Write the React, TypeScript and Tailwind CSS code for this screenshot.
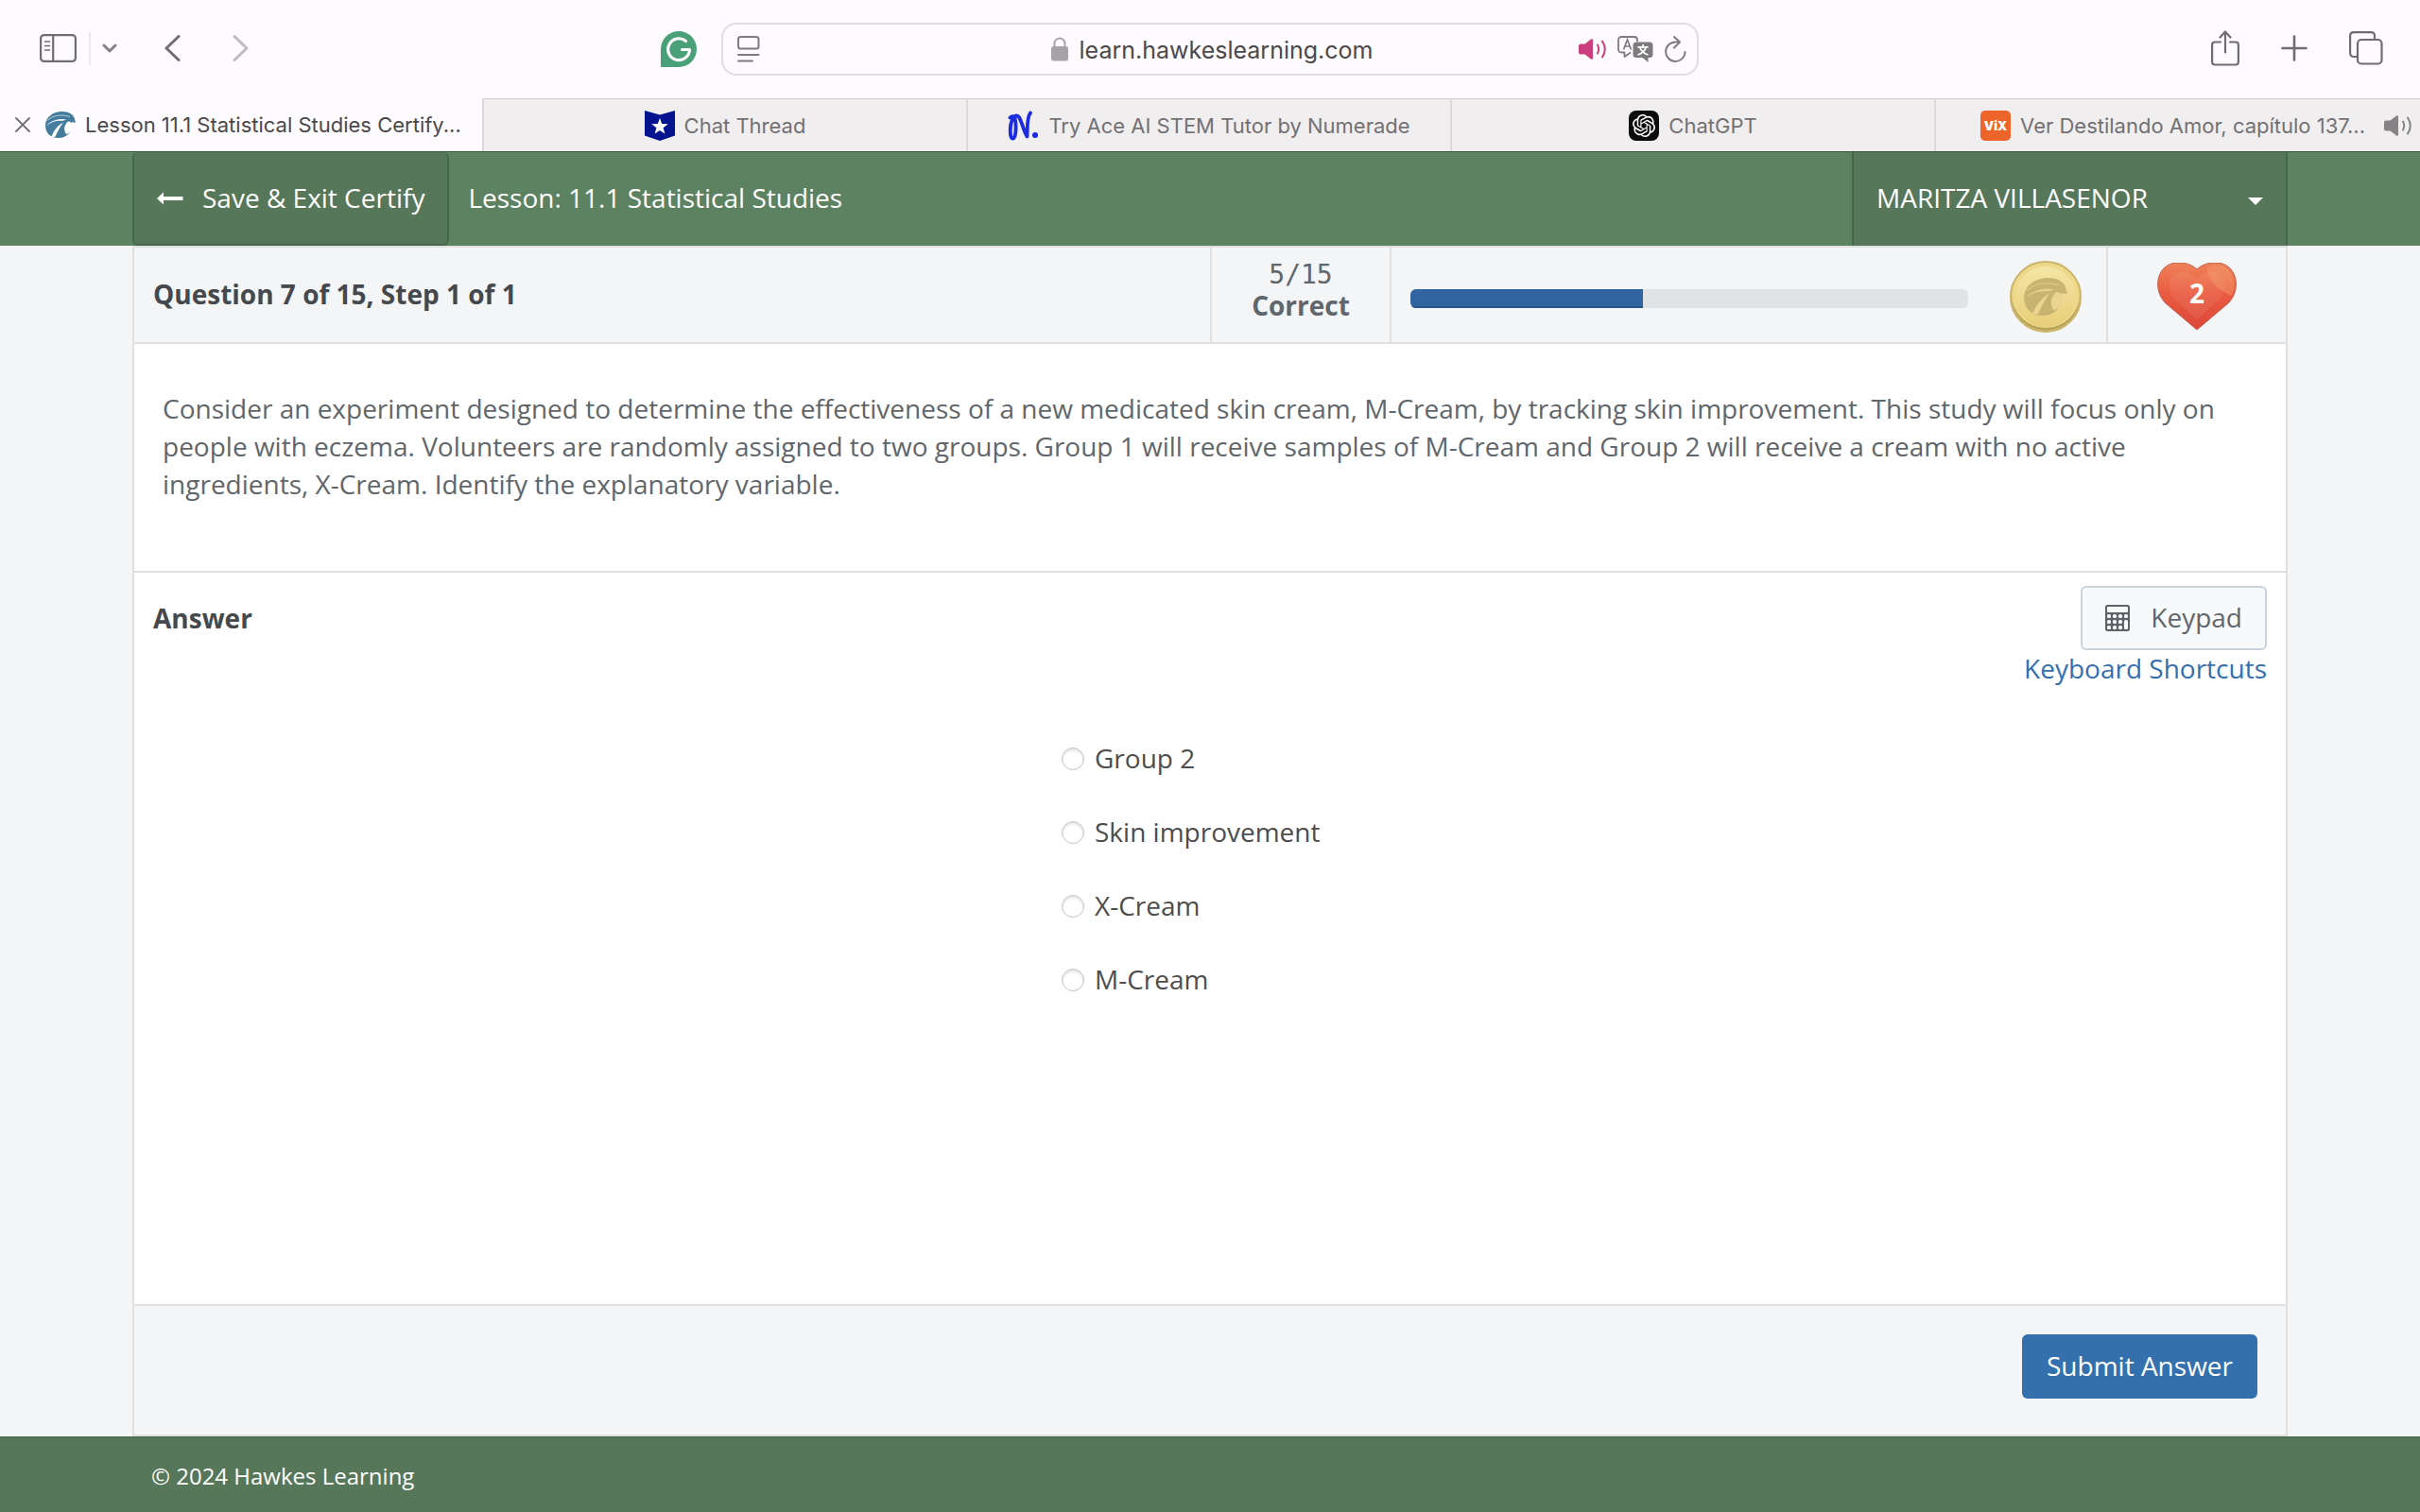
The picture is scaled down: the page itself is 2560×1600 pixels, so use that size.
import React, { useState } from "react";
import clsx from "clsx";
import { SiOpenai } from "react-icons/si";

interface Tab {
  title: string;
  icon: React.ReactNode;
}

const CHOICES = ["Group 2", "Skin improvement", "X-Cream", "M-Cream"];

const CORRECT = 5;
const REQUIRED = 12;
const TOTAL = 15;
const LIVES = 2;

function HawkMark({ className, dark, light }: { className?: string; dark: string; light: string }) {
  return (
    <svg viewBox="0 0 32 28" className={className} aria-hidden="true">
      <path d="M0 15C0 6 8 0 18 0c7 0 11 3 12.500 6.500L32 12l-4-1c1 9-4 17-14 17C5 28 0 22 0 15Z" fill={dark} />
      <path d="M2 9.500C8 4 17 2.500 26 5.500" fill="none" stroke={light} strokeWidth="1" opacity="0.6" />
      <path d="M1 15.500C5 9.500 14 7 22 8.500c-2 1.500-4 1.500-7 1.500-6 0-10 2-14 5.500Z" fill={light} opacity="0.85" />
      <path d="M6.500 26.500C8.500 21 12.500 15 19 11.500c-3.500 4.500-6 9.500-8.500 15q-2 1-4 0Z" fill={light} />
      <path d="M24 10.500c-4.500 4-5 9-2 13.500 4.500-1 6.500-5.500 6.500-9.500 0-2-1.500-4-4.500-4Z" fill={light} />
    </svg>
  );
}

function Speaker({ className }: { className?: string }) {
  return (
    <svg viewBox="0 0 30 22" className={className} aria-hidden="true">
      <path d="M0 7.500Q0 5.500 2 5.500H6.500L13 .5Q15 -.5 15 1.500v19q0 2-2 1L6.500 16.500H2Q0 16.500 0 14.500Z" fill="currentColor" />
      <path d="M20 6.500Q22.500 11 20 15.500M25 2.500Q30.500 11 25 19.500" fill="none" stroke="currentColor" strokeWidth="2" strokeLinecap="round" />
    </svg>
  );
}

const TABS: Tab[] = [
  {
    title: "Chat Thread",
    icon: (
      <svg viewBox="0 0 32 32" className="size-8" aria-hidden="true">
        <path d="M0 0l16 4.500L32 0v26.500L16 32 0 26.500Z" fill="#04148f" />
        <path d="M16 8l2.200 6.100 6.500.2-5.100 4 1.800 6.200-5.400-3.600-5.400 3.600 1.800-6.200-5.100-4 6.500-.2Z" fill="#fff" />
      </svg>
    ),
  },
  {
    title: "Try Ace AI STEM Tutor by Numerade",
    icon: (
      <svg viewBox="0 0 33 32" className="h-8 w-[33px]" aria-hidden="true">
        <path d="M2.500 7.500C5 5 7.500 6 8 10c1 6 1 19-2.500 19.500C2 30 2 16 4.500 10.500S10 4 12 7c3 5 5 15 8.500 20.500C21 19 20 7 24 2.500" fill="none" stroke="#1a2be0" strokeWidth="3.800" strokeLinecap="round" strokeLinejoin="round" />
        <circle cx="29" cy="26" r="3" fill="#1a2be0" />
      </svg>
    ),
  },
  {
    title: "ChatGPT",
    icon: (
      <span className="grid size-8 place-items-center rounded-lg bg-[#0c0c0c] text-white">
        <SiOpenai className="size-6" aria-hidden="true" />
      </span>
    ),
  },
];

function BrowserToolbar() {
  return (
    <div className="flex h-26 items-center justify-between bg-[#fdfbfd] pr-[39px] pl-[42px] text-[#6f6d70]">
      <div className="flex flex-1 items-center pb-0.5">
        <button type="button" aria-label="Show sidebar">
          <svg viewBox="0 0 39 30" className="h-[30px] w-[39px]" fill="none" stroke="currentColor" strokeWidth="2.200">
            <rect x="1.100" y="1.100" width="36.800" height="27.800" rx="3.500" />
            <path d="M14.200 1v28" />
            <path d="M5.500 8h5M5.500 12.500h5M5.500 17h5" strokeWidth="1.600" strokeLinecap="round" />
          </svg>
        </button>
        <span className="mr-3 ml-[13px] h-9 w-0.5 bg-[#ebe9eb]" />
        <button type="button" aria-label="Tab groups">
          <svg viewBox="0 0 16 10" className="h-2.5 w-4" fill="none" stroke="#858386" strokeWidth="3" strokeLinecap="round" strokeLinejoin="round">
            <path d="M2 2l6 6 6-6" />
          </svg>
        </button>
        <button type="button" aria-label="Back" className="ml-[50px]">
          <svg viewBox="0 0 17 28" className="h-7 w-[17px]" fill="none" stroke="currentColor" strokeWidth="3" strokeLinecap="round" strokeLinejoin="round">
            <path d="M15 1.500L2 14l13 12.500" />
          </svg>
        </button>
        <button type="button" aria-label="Forward" className="ml-[55px]" disabled>
          <svg viewBox="0 0 17 28" className="h-7 w-[17px]" fill="none" stroke="#bebcbe" strokeWidth="3" strokeLinecap="round" strokeLinejoin="round">
            <path d="M2 1.500L15 14 2 26.500" />
          </svg>
        </button>
      </div>

      {/* right padding balances the extension button so the address field stays centred */}
      <div className="flex items-center pr-17">
        <button type="button" aria-label="Grammarly" className="mr-[26px]">
          <svg viewBox="0 0 38 38" className="size-[38px]">
            <path d="M0 38V19a19 19 0 1 1 19 19Z" fill="#4aa078" />
            <path d="M26.500 10.500A11.400 11.400 0 1 0 30.500 19.500H22.500" fill="none" stroke="#fff" strokeWidth="3.200" strokeLinecap="round" strokeLinejoin="round" />
          </svg>
        </button>
        <div className="flex h-14 w-[1034px] items-center justify-between rounded-2xl border-2 border-[#dfdddf] pr-2.5 pl-[15px]">
          <button type="button" aria-label="Reader" className="w-[114px]">
            <svg viewBox="0 0 24 28" className="h-7 w-6" fill="none" stroke="#7d7b7e" strokeWidth="2" strokeLinecap="round">
              <rect x="1" y="1" width="21.500" height="12.500" rx="2.500" />
              <path d="M1 20h21.500M1 26.500h15" />
            </svg>
          </button>
          <div className="flex items-center gap-3">
            <svg viewBox="0 0 18 26" className="h-[26px] w-[18px]" aria-hidden="true">
              <rect y="10" width="18" height="15.500" rx="2.500" fill="#a5a3a6" />
              <path d="M3.500 11V7a5.500 5.500 0 0 1 11 0v4" fill="none" stroke="#a5a3a6" strokeWidth="2" />
            </svg>
            <span className="pt-0.5 text-[25px] leading-8 text-[#4b494c]">learn.hawkeslearning.com</span>
          </div>
          <div className="flex w-[114px] items-center justify-between text-[#7d7b7e]">
            <button type="button" aria-label="Mute tab">
              <Speaker className="h-[22px] w-[30px] text-[#cb3f7e]" />
            </button>
            <button type="button" aria-label="Translate">
              <svg viewBox="0 0 38 28" className="h-7 w-[38px]">
                <path d="M14 17.500l-6.500 4.500v-4.500H4.500Q1 17.500 1 14V4.500Q1 1 4.500 1H18q3 0 3 3.500V6" fill="none" stroke="currentColor" strokeWidth="1.800" strokeLinejoin="round" />
                <path d="M6.500 14.500l4-10.500 4 10.500M8 11h5" fill="none" stroke="currentColor" strokeWidth="1.700" />
                <path d="M20 6.500h14q3.500 0 3.500 3.500v9.500q0 3.500-3.500 3.500h-1.500v5l-6-5H20q-3.500 0-3.500-3.500V10q0-3.500 3.500-3.500Z" fill="currentColor" />
                <path d="M21.500 11.800h11M27 9v2.800M23.800 12c1 3.500 4 6.500 8.700 8M30.200 12c-1 3.500-4 6.500-8.700 8" fill="none" stroke="#fff" strokeWidth="1.700" />
              </svg>
            </button>
            <button type="button" aria-label="Reload">
              <svg viewBox="0 0 24 28" className="h-7 w-6" fill="none" stroke="currentColor" strokeWidth="2" strokeLinecap="round" strokeLinejoin="round">
                <path d="M16.500 6.500H12.500A10.200 10.200 0 1 0 22.500 17M11 1l6 5.600L11 12.500" />
              </svg>
            </button>
          </div>
        </div>
      </div>

      <div className="flex flex-1 items-center justify-end pb-0.5">
        <button type="button" aria-label="Share" className="mr-11">
          <svg viewBox="0 0 30 38" className="h-[38px] w-[30px]" fill="none" stroke="currentColor" strokeWidth="2.200" strokeLinecap="round" strokeLinejoin="round">
            <path d="M10 12.500H4Q1.100 12.500 1.100 15.500v18q0 3 2.900 3h22q2.900 0 2.900-3v-18q0-3-2.900-3h-6M15 23.500V2M9.500 7.500L15 1.500l5.500 6" />
          </svg>
        </button>
        <button type="button" aria-label="New tab" className="mr-11">
          <svg viewBox="0 0 28 28" className="size-7" fill="none" stroke="currentColor" strokeWidth="2.600" strokeLinecap="round">
            <path d="M14 1.500v25M1.500 14h25" />
          </svg>
        </button>
        <button type="button" aria-label="Tab overview">
          <svg viewBox="0 0 36 36" className="size-9" fill="none" stroke="currentColor" strokeWidth="2.200">
            <path d="M9 27H5Q1.100 27 1.100 23V5Q1.100 1.100 5 1.100h18q4 0 4 3.900v3.500" />
            <rect x="9" y="9" width="25.500" height="25.500" rx="4" />
          </svg>
        </button>
      </div>
    </div>
  );
}

function TabBar() {
  return (
    <div className="grid h-14 grid-cols-5 bg-[#f0eeef] text-[22px] leading-7 text-[#737174]">
      <div className="flex items-center border-r-2 border-[#dad8da] bg-[#fdfbfd] pl-4 text-[#4b494c]">
        <button type="button" aria-label="Close tab" className="mr-4">
          <svg viewBox="0 0 16 16" className="size-4" fill="none" stroke="#737174" strokeWidth="1.800" strokeLinecap="round">
            <path d="M1 1l14 14M15 1L1 15" />
          </svg>
        </button>
        <HawkMark className="mr-2.5 h-7 w-8" dark="#447c9e" light="#fff" />
        <span className="whitespace-nowrap">Lesson 11.1 Statistical Studies Certify...</span>
      </div>
      {TABS.map((tab) => (
        <div key={tab.title} className="flex items-center justify-center gap-2.5 border-t border-r-2 border-t-[#cfcdcf] border-r-[#dad8da]">
          {tab.icon}
          <span className="whitespace-nowrap">{tab.title}</span>
        </div>
      ))}
      <div className="flex items-center justify-end gap-2.5 border-t border-t-[#cfcdcf] pr-2">
        <svg viewBox="0 0 32 32" className="size-8" aria-hidden="true">
          <rect width="32" height="32" rx="5" fill="#ee652b" />
          <text x="16" y="21" textAnchor="middle" fontSize="13" fontWeight="900" fill="#fff">ViX</text>
        </svg>
        <span className="whitespace-nowrap">Ver Destilando Amor, capítulo 137...</span>
        <button type="button" aria-label="Mute tab" className="ml-2.5">
          <Speaker className="h-[22px] w-[30px] text-[#858386]" />
        </button>
      </div>
    </div>
  );
}

function LessonHeader() {
  return (
    <header className="border-t border-[#355c3e] bg-[#5c8262] px-35 text-[28px] leading-10 text-white">
      <div className="flex h-[99px] items-stretch">
        <button type="button" className="flex items-center gap-5 rounded-md border-2 border-t-0 border-[#46664b] bg-[#57775b] px-6">
          <svg viewBox="0 0 28 14" className="h-3.5 w-7" aria-hidden="true">
            <path d="M0 7l7-6.500V5h20.500v4H7v4.500Z" fill="#fff" />
          </svg>
          <span className="pb-0.5">Save &amp; Exit Certify</span>
        </button>
        <h1 className="flex flex-1 items-center pb-1 pl-5">Lesson: 11.1 Statistical Studies</h1>
        <button type="button" className="flex w-[461px] items-center justify-between border-x-2 border-[#46664b] bg-[#57775b] px-6">
          <span className="pb-1">MARITZA VILLASENOR</span>
          <svg viewBox="0 0 16 8" className="mt-1 h-2 w-4" aria-hidden="true">
            <path d="M0 0h16L8 8Z" fill="#fff" />
          </svg>
        </button>
      </div>
    </header>
  );
}

function Coin() {
  return (
    <div className="grid size-[76px] place-items-center rounded-full border-2 border-[#c9b468] bg-linear-to-b from-[#f6e7a9] to-[#e6cc74] shadow-[inset_0_-3px_0_#b8a35a,inset_0_0_0_4px_#eed98a]">
      <HawkMark className="h-10 w-[46px]" dark="#c8b470" light="#e9d58f" />
    </div>
  );
}

function Heart({ lives }: { lives: number }) {
  return (
    <div className="relative mt-1 h-18 w-21">
      <svg viewBox="0 0 84 72" className="h-18 w-21" aria-hidden="true">
        <defs>
          <linearGradient id="heart-fill" x1="0" y1="0" x2="0" y2="1">
            <stop offset="0" stopColor="#ee8257" />
            <stop offset="0.450" stopColor="#ea5c41" />
            <stop offset="1" stopColor="#dc4638" />
          </linearGradient>
        </defs>
        <path d="M42 71L9 43C-2 32-2 14 8 5c9-8 26-6 34 2 8-8 25-10 34-2 10 9 10 27-1 38Z" fill="url(#heart-fill)" stroke="#c0604f" strokeWidth="1" />
        <path d="M42 60L19 39c-8-9-8-20-2-26 8-6 19-3 25 4 6-7 17-10 25-4 6 6 6 17-2 26Z" fill="#fff" opacity="0.070" />
        <path d="M52 6c9-6 21-4 27 6 4 8 3 17-1 23-8-4-22-11-26-29Z" fill="#f6a878" opacity="0.350" />
      </svg>
      <span className="absolute inset-0 flex items-center justify-center pb-2 text-[28px] font-bold text-white">{lives}</span>
    </div>
  );
}

function StatusBar() {
  return (
    <div className="flex h-26 items-stretch border-y-2 border-[#e0e0e0] bg-[#f3f5f7]">
      <h2 className="flex flex-1 items-center pb-0.5 pl-5 text-[28px] font-bold text-[#45494d]">Question 7 of 15, Step 1 of 1</h2>
      <div className="w-48 border-x-2 border-[#e0e0e0] pt-3 text-center text-[28px] leading-[33px] text-[#60666c]">
        <div className="font-['DejaVu_Sans_Mono',monospace]">{CORRECT}/{TOTAL}</div>
        <div className="font-bold">Correct</div>
      </div>
      <div className="flex w-[756px] items-center pr-[26px] pl-5">
        <div className="mt-2 h-5 flex-1 overflow-hidden rounded-md bg-[#e1e2e6]" role="progressbar" aria-valuenow={CORRECT} aria-valuemax={REQUIRED}>
          <div className="h-full border-b-2 border-[#27528a] bg-[#3165a2]" style={{ width: `${(CORRECT / REQUIRED) * 100}%` }} />
        </div>
        <div className="mt-1 ml-11">
          <Coin />
        </div>
      </div>
      <div className="flex w-[190px] items-center justify-center border-l-2 border-[#e0e0e0]">
        <Heart lives={LIVES} />
      </div>
    </div>
  );
}

function KeypadIcon() {
  return (
    <svg viewBox="0 0 26 28" className="h-7 w-[26px]" aria-hidden="true">
      <rect width="26" height="28" rx="2.500" fill="#5d6368" />
      <rect x="2" y="2" width="22" height="6" rx="1" fill="#f7f9fb" />
      {[10, 16, 22].map((y) =>
        [2, 8, 14, 20].map((x) =>
          x === 20 && y > 10 ? null : <rect key={`${x}-${y}`} x={x} y={y} width="4" height="4" rx="1.500" fill="#f7f9fb" />
        )
      )}
      <rect x="20" y="16" width="4" height="10" rx="1.500" fill="#f7f9fb" />
    </svg>
  );
}

export default function App() {
  const [selected, setSelected] = useState<string | null>(null);

  return (
    <div className="flex min-h-screen flex-col bg-[#f3f5f7] font-['Open_Sans',sans-serif]">
      {/* Browser chrome */}
      <div className="font-['Inter',sans-serif]">
        <BrowserToolbar />
        <TabBar />
      </div>

      <LessonHeader />

      <main className="mx-35 flex flex-1 flex-col border-x-2 border-b-2 border-[#e0e0e0] bg-white">
        <StatusBar />

        {/* Question */}
        <section className="border-b-2 border-[#e0e0e0] px-[30px] pt-12 pb-18 text-[28px] leading-10 text-[#60666c]">
          <p>
            Consider an experiment designed to determine the effectiveness of a new medicated skin cream, M-Cream, by tracking skin
            improvement. This study will focus only on people with eczema. Volunteers are randomly assigned to two groups. Group 1 will
            receive samples of M-Cream and Group 2 will receive a cream with no active ingredients, X-Cream. Identify the explanatory
            variable.
          </p>
        </section>

        {/* Answer */}
        <section className="flex-1 px-5 pt-3.5 text-[28px] leading-10">
          <div className="flex items-start justify-between">
            <h2 className="pt-3.5 font-bold text-[#45494d]">Answer</h2>
            <div className="flex flex-col items-end">
              <button type="button" className="flex h-17 items-center gap-[22px] rounded-md border-2 border-[#c9d4dc] bg-[#f7f9fb] px-6 text-[#60666c]">
                <KeypadIcon />
                <span className="pb-0.5">Keypad</span>
              </button>
              <a href="#shortcuts" className="leading-[38px] text-[#336fae]">Keyboard Shortcuts</a>
            </div>
          </div>

          <fieldset className="mx-auto mt-14 flex w-[314px] flex-col gap-9 text-[#4d4d4d]">
            {CHOICES.map((choice) => (
              <label key={choice} className="flex items-center gap-[11px] whitespace-nowrap">
                <input
                  type="radio"
                  name="answer"
                  value={choice}
                  checked={selected === choice}
                  onChange={() => setSelected(choice)}
                  className={clsx(
                    "size-6 appearance-none rounded-full border border-[#c4c4c4] shadow-[inset_0_2px_3px_rgba(0,0,0,0.12)]",
                    selected === choice ? "bg-[#3470ae]" : "bg-white"
                  )}
                />
                <span className="pb-0.5">{choice}</span>
              </label>
            ))}
          </fieldset>
        </section>

        <div className="flex h-[138px] justify-end border-t-2 border-[#e0e0e0] bg-[#f3f5f7] pt-[30px] pr-[30px]">
          <button type="button" className="h-17 rounded-md bg-[#3470ae] px-[26px] pb-0.5 text-[28px] leading-10 text-white">
            Submit Answer
          </button>
        </div>
      </main>

      <footer className="h-20 border-t-2 border-[#4f7054] bg-[#57775b] px-40 pt-5 text-[24px] leading-10 text-white">
        © 2024 Hawkes Learning
      </footer>
    </div>
  );
}
